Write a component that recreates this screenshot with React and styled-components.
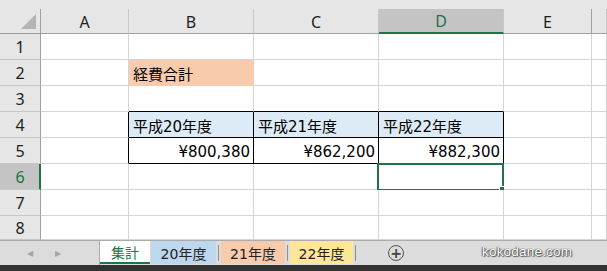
import { Fragment } from "react";
import styled, { createGlobalStyle } from "styled-components";

const GlobalStyle = createGlobalStyle`
  body {
    margin: 0;
    background: #ffffff;
  }
`;

const GREEN = "#217346";
const GRID = "#d4d4d4";
const HEAD = "#e6e6e6";
const HEAD_SEL = "#c4c4c4";

const columns = ["A", "B", "C", "D", "E", ""];

const rows = [
  {},
  { B: { text: "経費合計", bg: "#f8cbad" } },
  { B: { bottom: "#000" }, C: { bottom: "#000" }, D: { bottom: "#000" } },
  {
    A: { right: "#000" },
    B: { text: "平成20年度", bg: "#ddebf7", table: true },
    C: { text: "平成21年度", bg: "#ddebf7", table: true },
    D: { text: "平成22年度", bg: "#ddebf7", table: true },
  },
  {
    A: { right: "#000" },
    B: { text: "¥800,380", num: true, table: true },
    C: { text: "¥862,200", num: true, table: true },
    D: { text: "¥882,300", num: true, table: true },
  },
  { D: { selected: true } },
  {},
  {},
];

const Sheet = styled.div`
  width: 607px;
  height: 271px;
  display: flex;
  flex-direction: column;
  overflow: hidden;
  background: ${HEAD};
`;

const TopStrip = styled.div`
  height: 9px;
  background: ${HEAD};
`;

const Grid = styled.div`
  display: grid;
  grid-template-columns: 41px 88px 125px 125px 125px 88px 1fr;
  grid-template-rows: 25px repeat(7, 26px) 24px;
  background: #fff;
`;

const Corner = styled.div`
  position: relative;
  background: ${HEAD};
  border-right: 1px solid #9f9f9f;
  border-bottom: 1px solid #9f9f9f;

  &::after {
    content: "";
    position: absolute;
    right: 4px;
    bottom: 4px;
    border-style: solid;
    border-width: 0 0 15px 15px;
    border-color: transparent transparent #b4b4b4 transparent;
  }
`;

const ColHead = styled.div`
  display: flex;
  align-items: center;
  justify-content: center;
  background: ${(p) => (p.$sel ? HEAD_SEL : HEAD)};
  color: ${(p) => (p.$sel ? GREEN : "#1e1e1e")};
  border-right: 1px solid ${(p) => (p.$last ? "#9f9f9f" : "#c8c8c8")};
  border-bottom: ${(p) => (p.$sel ? `2px solid ${GREEN}` : "1px solid #9f9f9f")};
  font-family: "Noto Sans", "DejaVu Sans", sans-serif;
  font-size: 16px;
  padding-top: 1px;
`;

const RowHead = styled.div`
  display: flex;
  align-items: center;
  justify-content: center;
  background: ${(p) => (p.$sel ? HEAD_SEL : HEAD)};
  color: ${(p) => (p.$sel ? GREEN : "#1e1e1e")};
  border-right: ${(p) => (p.$sel ? `2px solid ${GREEN}` : "1px solid #9f9f9f")};
  border-bottom: 1px solid #c8c8c8;
  font-family: "Noto Sans", "DejaVu Sans", sans-serif;
  font-size: 16px;
  padding-left: ${(p) => (p.$sel ? "1px" : "0")};
`;

const Cell = styled.div`
  position: relative;
  display: flex;
  align-items: center;
  justify-content: ${(p) => (p.$num ? "flex-end" : "flex-start")};
  padding: 2px 3px 0 4px;
  background: ${(p) => p.$bg || "#fff"};
  border-right: 1px solid ${(p) => p.$right || GRID};
  border-bottom: 1px solid ${(p) => p.$bottom || GRID};
  font-family: "DejaVu Sans", "Noto Sans CJK JP", sans-serif;
  font-size: 15px;
  color: #000;
  white-space: nowrap;
`;

const Selection = styled.span`
  position: absolute;
  top: -1px;
  left: -2px;
  right: -1px;
  bottom: -2px;
  border: 2px solid ${GREEN};
  pointer-events: none;

  &::after {
    content: "";
    position: absolute;
    right: -5px;
    bottom: -5px;
    width: 6px;
    height: 6px;
    background: ${GREEN};
    border: 1px solid #fff;
  }
`;

const TabBar = styled.div`
  height: 24px;
  display: flex;
  align-items: stretch;
  background: #dcdcdc;
  border-top: 1px solid #ababab;
`;

const Nav = styled.div`
  width: 100px;
  display: flex;
  align-items: center;
  justify-content: center;
  gap: 22px;
  padding-right: 11px;
  box-sizing: border-box;
  color: #a6a6a6;
  font-size: 8px;
  border-right: 1px solid #ababab;
`;

const Tab = styled.div`
  display: flex;
  align-items: center;
  justify-content: center;
  width: ${(p) => p.$w}px;
  margin: 0 1px 1px 0;
  background: ${(p) => p.$bg};
  color: ${(p) => (p.$active ? GREEN : "#222")};
  border-bottom: ${(p) => (p.$active ? `2px solid ${GREEN}` : "none")};
  font-family: "DejaVu Sans", "Noto Sans CJK JP", sans-serif;
  font-size: 14px;
  font-weight: 400;
`;

const TabSep = styled.div`
  width: 1px;
  margin: 4px 2px 4px 1px;
  background: #8f8f8f;
`;

const AddButton = styled.div`
  width: 14px;
  height: 14px;
  margin: 4px 0 0 30px;
  border: 1.5px solid #555;
  border-radius: 50%;
  display: flex;
  align-items: center;
  justify-content: center;
  color: #444;
  font-family: "DejaVu Sans", sans-serif;
  font-size: 14px;
  font-weight: bold;
  line-height: 1;
`;

const Watermark = styled.div`
  margin: 3px 0 0 78px;
  color: #fff;
  font-family: "Liberation Sans", sans-serif;
  font-size: 13.5px;
  letter-spacing: 0.2px;
  text-shadow: 0 0 1px #333, 1px 1px 1px #555, -1px 0 1px #777;
`;

const DarkBar = styled.div`
  flex: 1;
  background: #323232;
`;

const tabs = [
  { name: "集計", bg: "#fff", w: 50, active: true },
  { name: "20年度", bg: "#bdd7ee", w: 65 },
  { name: "21年度", bg: "#f8cbad", w: 64 },
  { name: "22年度", bg: "#ffe699", w: 63 },
];

const App = () => {
  return (
    <>
      <GlobalStyle />
      <Sheet>
        <TopStrip />
        <Grid>
          <Corner />
          {columns.map((c, i) => (
            <ColHead key={i} $sel={c === "D"} $last={c === "E"}>
              {c}
            </ColHead>
          ))}
          {rows.map((row, r) => (
            <Fragment key={r}>
              <RowHead $sel={r === 5}>{r + 1}</RowHead>
              {columns.map((c, i) => {
                const cell = row[c] || {};
                return (
                  <Cell
                    key={i}
                    $bg={cell.bg}
                    $num={cell.num}
                    $right={cell.table ? "#000" : cell.bg || cell.right}
                    $bottom={cell.table ? "#000" : cell.bg || cell.bottom}
                  >
                    {cell.text}
                    {cell.selected && <Selection />}
                  </Cell>
                );
              })}
            </Fragment>
          ))}
        </Grid>
        <TabBar>
          <Nav>
            <span>◀</span>
            <span>▶</span>
          </Nav>
          {tabs.map((t, i) => (
            <Fragment key={t.name}>
              <Tab $bg={t.bg} $w={t.w} $active={t.active}>
                {t.name}
              </Tab>
              {i > 0 && <TabSep />}
            </Fragment>
          ))}
          <AddButton>+</AddButton>
          <Watermark>kokodane.com</Watermark>
        </TabBar>
        <DarkBar />
      </Sheet>
    </>
  );
};

export default App;
